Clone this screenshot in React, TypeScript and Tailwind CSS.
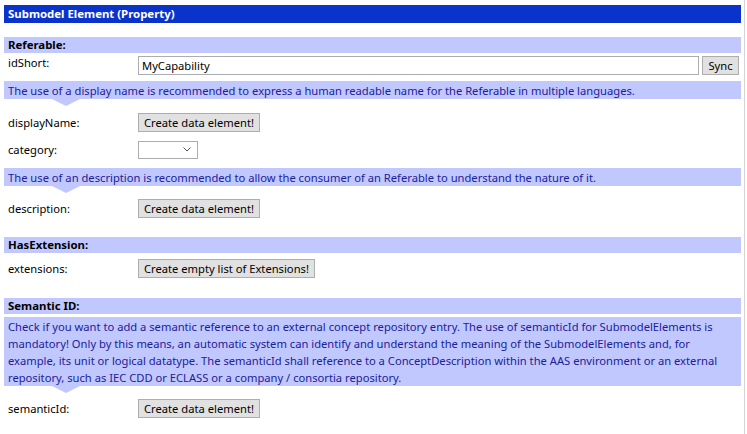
import React from 'react';

const font = { fontFamily: '"Noto Sans", "Open Sans", sans-serif' };

const Header = ({ title }: { title: string }) => (
  <div className="h-[16px] bg-[#c0c8fe] pl-[4px] text-[11.4px] leading-[16px] font-bold text-black">{title}</div>
);

const Hint = ({ children }: { children: React.ReactNode }) => (
  <div className="relative">
    <div className="bg-[#c0c8fe] px-[4px] pt-[1px] text-[11.2px] leading-[17px] text-[#20209a]">{children}</div>
    <div className="absolute left-[48px] top-full h-0 w-0 border-x-[14px] border-t-[7px] border-x-transparent border-t-[#c0c8fe]" />
  </div>
);

const Btn = ({ children }: { children: React.ReactNode }) => (
  <button className="h-[19px] border border-[#adadad] bg-[#e1e1e1] px-[5px] text-[11.2px] leading-[17px] text-black">{children}</button>
);

const Row = ({ label, children, className = '' }: { label: string; children: React.ReactNode; className?: string }) => (
  <div className={`flex h-[19px] items-center ${className}`}>
    <div className="w-[134px] pl-[4px] text-[11.2px] leading-[17px] text-black">{label}</div>
    {children}
  </div>
);

export default function App() {
  return (
    <div className="h-[434px] w-[747px] overflow-hidden bg-white" style={font}>
      <div className="h-full w-[745px] border-r border-[#d4d4d4] pl-[4px] pr-[3px] pt-[5px]">
        <div className="h-[18px] bg-[#0a33cc] pl-[4px] text-[11.4px] font-bold leading-[18px] text-white">Submodel Element (Property)</div>

        <div className="mt-[14px]">
          <Header title="Referable:" />
        </div>
        <div className="mt-[3px] flex h-[19px]">
          <div className="w-[134px] pl-[4px] text-[11.2px] leading-[14px] text-black">idShort:</div>
          <div className="h-[19px] w-[561px] border border-[#abadb3] bg-white pl-[3px] text-[11.2px] leading-[17px] text-black">MyCapability</div>
          <button className="ml-[3px] h-[19px] w-[37px] border border-[#adadad] bg-[#e1e1e1] text-[11.2px] leading-[17px] text-black">Sync</button>
        </div>
        <div className="mt-[6px]">
          <Hint>The use of a display name is recommended to express a human readable name for the Referable in multiple languages.</Hint>
        </div>
        <Row label="displayName:" className="mt-[14px]">
          <Btn>Create data element!</Btn>
        </Row>
        <Row label="category:" className="mt-[8px]">
          <div className="flex h-[18px] w-[60px] items-center justify-end border border-[#abadb3] bg-white pr-[6px]">
            <svg width="8" height="5" viewBox="0 0 8 5" fill="none" stroke="#555" strokeWidth="1">
              <path d="M0.5 0.5 L4 4 L7.5 0.5" />
            </svg>
          </div>
        </Row>
        <div className="mt-[9px]">
          <Hint>The use of an description is recommended to allow the consumer of an Referable to understand the nature of it.</Hint>
        </div>
        <Row label="description:" className="mt-[13px]">
          <Btn>Create data element!</Btn>
        </Row>

        <div className="mt-[19px]">
          <Header title="HasExtension:" />
        </div>
        <Row label="extensions:" className="mt-[6px]">
          <Btn>Create empty list of Extensions!</Btn>
        </Row>

        <div className="mt-[20px]">
          <Header title="Semantic ID:" />
        </div>
        <div className="mt-[3px]">
          <Hint>
            Check if you want to add a semantic reference to an external concept repository entry. The use of semanticId for SubmodelElements is mandatory! Only by this means, an automatic system can identify and understand the meaning of the SubmodelElements and, for example, its unit or logical datatype. The semanticId shall reference to a ConceptDescription within the AAS environment or an external repository, such as IEC CDD or ECLASS or a company / consortia repository.
          </Hint>
        </div>
        <Row label="semanticId:" className="mt-[13px]">
          <Btn>Create data element!</Btn>
        </Row>
      </div>
    </div>
  );
}
